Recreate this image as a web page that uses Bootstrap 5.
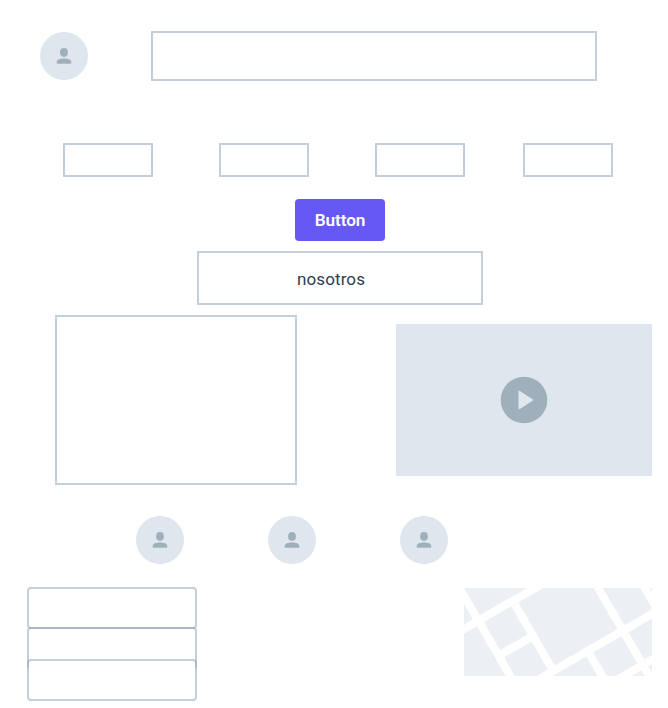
<!DOCTYPE html>
<html lang="es">
<head>
<meta charset="utf-8">
<meta name="viewport" content="width=device-width, initial-scale=1">
<title>Nosotros</title>
<link href="https://cdn.jsdelivr.net/npm/bootstrap@5.3.0/dist/css/bootstrap.min.css" rel="stylesheet">
<style>
body{background:#fff;font-family:Roboto,"Liberation Sans",sans-serif;color:#2c3e50}
.page{width:668px;height:708px;padding-top:31px}
.frame{border:2px solid #c3cfda}
.avatar{width:48px;height:48px;background:#dfe6ee}
.top-row{padding-left:40px;gap:63px;height:50px}
.banner{width:446px;height:50px}
.menu{margin:62px 0 0 63px;height:34px}
.menu-item{width:90px;height:34px;margin-right:66px}
.menu-item:nth-child(3){margin-right:58px}
.cta{width:90px;height:42px;margin:22px 0 0 295px;border-radius:4px;--bs-btn-bg:#6558f5;--bs-btn-color:#fff;--bs-btn-border-width:0;--bs-btn-hover-bg:#5548e5;--bs-btn-hover-color:#fff;font-size:17.2px;font-weight:600;line-height:20px;letter-spacing:-.1px}
.heading{width:286px;height:54px;margin:10px 0 0 197px;padding:1px 18px 0 0;font-size:17px;line-height:20px;letter-spacing:.12px}
.media{margin:10px 0 0 55px;gap:99px;height:170px}
.panel{width:242px;height:170px}
.video{width:256px;height:152px;background:#dfe6ee}
.team{margin:31px 0 0 136px;gap:84px}
.bottom-row{margin-top:23px;padding-left:27px;gap:267px}
.fields{width:170px}
.field{height:42px;padding:0;border:2px solid rgba(139,157,180,.5);border-radius:4px;background:#fff;background-clip:padding-box}
.field:nth-child(2){margin-top:-2px}
.field:nth-child(3){margin-top:-10px}
.map{margin-top:1px;background:#ecf0f5}
</style>
<script src="https://cdn.jsdelivr.net/npm/bootstrap@5.3.0/dist/js/bootstrap.bundle.min.js" defer></script>
</head>
<body>
<svg width="0" height="0" class="position-absolute" aria-hidden="true"><symbol id="person" viewBox="0 0 48 48"><ellipse cx="24" cy="20.4" rx="3.9" ry="4.3" fill="#9fb0bc"/><path d="M16.8 31.8v-2.2c0-2 3-3.1 7.2-3.1s7.2 1.1 7.2 3.1v2.2z" fill="#9fb0bc"/></symbol></svg>
<main class="page overflow-hidden">
  <header class="top-row d-flex align-items-center">
    <svg class="avatar rounded-circle"><use href="#person"/></svg>
    <div class="banner frame"></div>
  </header>
  <nav class="menu d-flex">
    <div class="menu-item frame"></div><div class="menu-item frame"></div><div class="menu-item frame"></div><div class="menu-item frame me-0"></div>
  </nav>
  <button type="button" class="cta btn d-flex align-items-center justify-content-center p-0">Button</button>
  <div class="heading frame d-flex align-items-center justify-content-center">nosotros</div>
  <section class="media d-flex align-items-center">
    <div class="panel frame"></div>
    <div class="video d-flex align-items-center justify-content-center">
      <svg width="48" height="48"><circle cx="24" cy="24" r="23.3" fill="#9fb0bc"/><path d="M19 14.9 33 24 19 33.1z" fill="#dfe6ee" stroke="#dfe6ee" stroke-linejoin="round"/></svg>
    </div>
  </section>
  <section class="team d-flex">
    <svg class="avatar rounded-circle"><use href="#person"/></svg>
    <svg class="avatar rounded-circle"><use href="#person"/></svg>
    <svg class="avatar rounded-circle"><use href="#person"/></svg>
  </section>
  <footer class="bottom-row d-flex align-items-start">
    <div class="fields d-flex flex-column">
      <input class="field form-control" aria-label="Campo 1"><input class="field form-control" aria-label="Campo 2"><input class="field form-control" aria-label="Campo 3">
    </div>
    <svg class="map flex-shrink-0" width="188" height="88" viewBox="0 0 188 88">
      <g fill="none" stroke="#fff" stroke-width="8">
        <path d="M-10 46.8 90-10.9M70 94.1 198 20.2M-10.3-10 52 98M51 16.7 89.6 83.5M38 65.7 66 49.7M128.5-10 191 98M126 66.7 144 98M142.4 98 198 65.9M175.2-10 195 24.3"/>
      </g>
    </svg>
  </footer>
</main>
</body>
</html>
